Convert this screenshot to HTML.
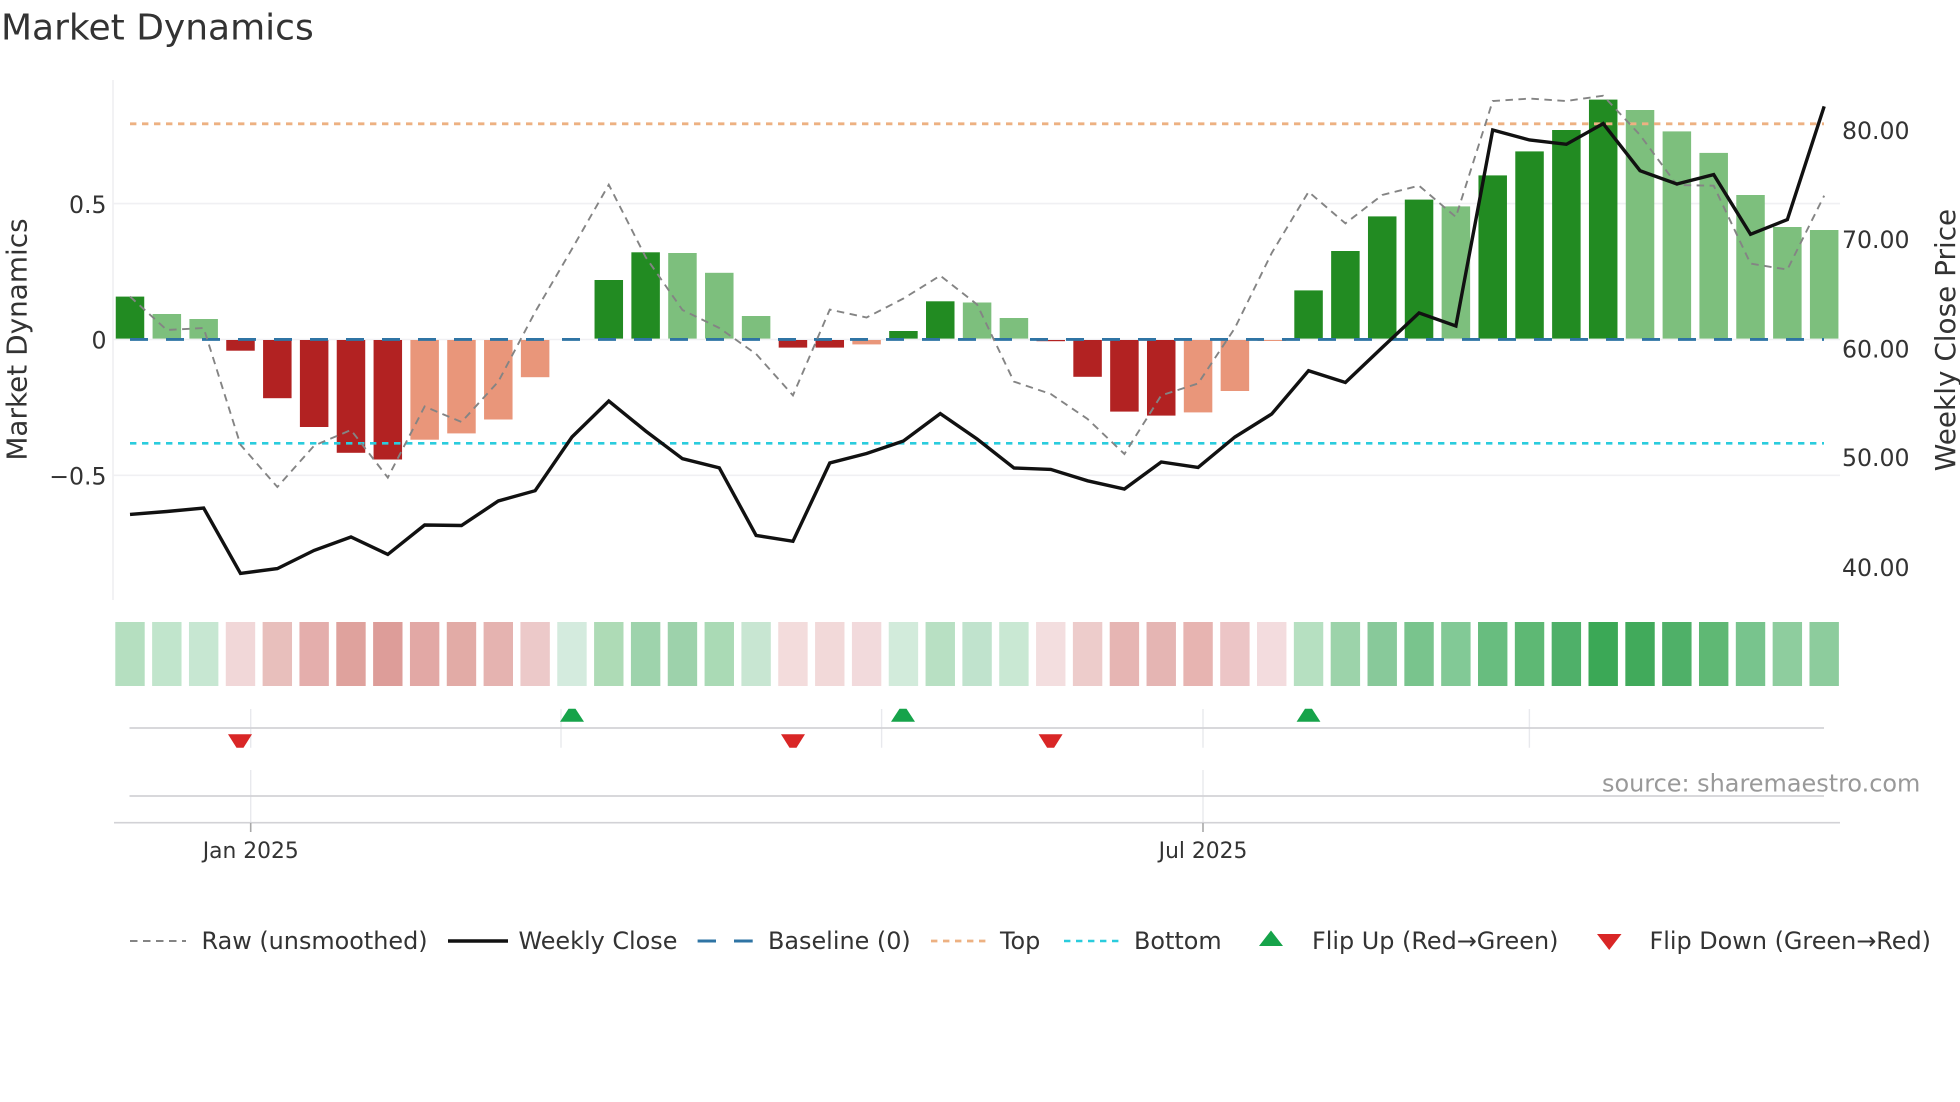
<!DOCTYPE html>
<html lang="en">
<head>
<meta charset="utf-8">
<title>Market Dynamics</title>
<style>
html,body{margin:0;padding:0;background:#fff;width:1960px;height:1102px;overflow:hidden}
svg{display:block}
text{font-family:"DejaVu Sans","Liberation Sans",sans-serif;fill:#333}
.t{font-size:23.9px}
.k{font-size:23.6px}
.dg{fill:#228b22}.lg{fill:#7dbf7d}.dr{fill:#b22222}.lr{fill:#e9967a}
</style>
</head>
<body>
<svg width="1960" height="1102" viewBox="0 0 1960 1102" xmlns="http://www.w3.org/2000/svg">
<rect width="1960" height="1102" fill="#fff"/>
<text x="1" y="39.5" font-size="36">Market Dynamics</text>

<!-- grid and spine -->
<path d="M113 80V600" stroke="#eeeef0" stroke-width="1.5" fill="none"/>
<path d="M113 203.6H1840M113 475.3H1840M113 339.5H1840" stroke="#f0f0f3" stroke-width="1.6" fill="none"/>

<!-- bars -->
<g>
<rect class="dg" x="115.75" y="296.6" width="28.5" height="42"/>
<rect class="lg" x="152.58" y="314" width="28.5" height="24.6"/>
<rect class="lg" x="189.41" y="319" width="28.5" height="19.6"/>
<rect class="dr" x="226.24" y="340" width="28.5" height="10.7"/>
<rect class="dr" x="263.07" y="340" width="28.5" height="58.2"/>
<rect class="dr" x="299.9" y="340" width="28.5" height="87"/>
<rect class="dr" x="336.73" y="340" width="28.5" height="112.8"/>
<rect class="dr" x="373.56" y="340" width="28.5" height="119.5"/>
<rect class="lr" x="410.39" y="340" width="28.5" height="99.7"/>
<rect class="lr" x="447.22" y="340" width="28.5" height="93.4"/>
<rect class="lr" x="484.05" y="340" width="28.5" height="79.5"/>
<rect class="lr" x="520.88" y="340" width="28.5" height="37.2"/>
<rect class="dg" x="594.54" y="280" width="28.5" height="58.6"/>
<rect class="dg" x="631.37" y="252.3" width="28.5" height="86.3"/>
<rect class="lg" x="668.2" y="253" width="28.5" height="85.6"/>
<rect class="lg" x="705.03" y="272.8" width="28.5" height="65.8"/>
<rect class="lg" x="741.86" y="316" width="28.5" height="22.6"/>
<rect class="dr" x="778.69" y="340" width="28.5" height="7.6"/>
<rect class="dr" x="815.52" y="340" width="28.5" height="7.6"/>
<rect class="lr" x="852.35" y="340" width="28.5" height="4.4"/>
<rect class="dg" x="889.18" y="331" width="28.5" height="7.6"/>
<rect class="dg" x="926.01" y="301.3" width="28.5" height="37.3"/>
<rect class="lg" x="962.84" y="302.5" width="28.5" height="36.1"/>
<rect class="lg" x="999.67" y="318" width="28.5" height="20.6"/>
<rect class="dr" x="1036.5" y="340" width="28.5" height="1.2"/>
<rect class="dr" x="1073.33" y="340" width="28.5" height="36.8"/>
<rect class="dr" x="1110.16" y="340" width="28.5" height="71.6"/>
<rect class="dr" x="1146.99" y="340" width="28.5" height="75.6"/>
<rect class="lr" x="1183.82" y="340" width="28.5" height="72.4"/>
<rect class="lr" x="1220.65" y="340" width="28.5" height="51"/>
<rect class="lr" x="1257.48" y="340" width="28.5" height="1"/>
<rect class="dg" x="1294.31" y="290.4" width="28.5" height="48.2"/>
<rect class="dg" x="1331.14" y="251" width="28.5" height="87.6"/>
<rect class="dg" x="1367.97" y="216.4" width="28.5" height="122.2"/>
<rect class="dg" x="1404.8" y="199.6" width="28.5" height="139"/>
<rect class="lg" x="1441.63" y="206.4" width="28.5" height="132.2"/>
<rect class="dg" x="1478.46" y="175.4" width="28.5" height="163.2"/>
<rect class="dg" x="1515.29" y="151.4" width="28.5" height="187.2"/>
<rect class="dg" x="1552.12" y="130" width="28.5" height="208.6"/>
<rect class="dg" x="1588.95" y="99.6" width="28.5" height="239"/>
<rect class="lg" x="1625.78" y="110" width="28.5" height="228.6"/>
<rect class="lg" x="1662.61" y="131.4" width="28.5" height="207.2"/>
<rect class="lg" x="1699.44" y="152.9" width="28.5" height="185.7"/>
<rect class="lg" x="1736.27" y="195" width="28.5" height="143.6"/>
<rect class="lg" x="1773.1" y="227" width="28.5" height="111.6"/>
<rect class="lg" x="1809.93" y="230" width="28.5" height="108.6"/>
</g>

<!-- reference lines -->
<path d="M130 339.4H1824" stroke="#2f74a4" stroke-width="2.9" stroke-dasharray="18 18" fill="none"/>
<path d="M130 123.8H1824" stroke="#edb182" stroke-width="2.8" stroke-dasharray="6.4 5.6" fill="none"/>
<path d="M130 443.3H1824" stroke="#2accdd" stroke-width="2.6" stroke-dasharray="6.4 5.6" fill="none"/>

<!-- raw -->
<polyline fill="none" stroke="#848484" stroke-width="1.9" stroke-dasharray="7.5 5.5" points="130,296.6 166.83,330 203.66,328 240.49,444.8 277.32,487 314.15,445.6 350.98,430 387.81,477.6 424.64,406.5 461.47,422 498.3,381.6 535.13,312 571.96,249 608.79,184.7 645.62,257 682.45,310 719.28,328 756.11,354 792.94,395.4 829.77,309.6 866.6,317.5 903.43,298.5 940.26,275.6 977.09,304.5 1013.92,381.6 1050.75,394 1087.58,419 1124.41,454 1161.24,395.4 1198.07,383.5 1234.9,328 1271.73,253 1308.56,191.8 1345.39,223.4 1382.22,195 1419.05,185.7 1455.88,217 1492.71,101 1529.54,98.6 1566.37,101 1603.2,95.7 1640.03,135 1676.86,185 1713.69,185.7 1750.52,263.6 1787.35,269.6 1824.18,195.7"/>

<!-- weekly close -->
<polyline fill="none" stroke="#111" stroke-width="3.4" stroke-linejoin="miter" points="130,514.4 166.83,511.5 203.66,508 240.49,573.4 277.32,568.6 314.15,550.4 350.98,537 387.81,554.4 424.64,525 461.47,525.5 498.3,501 535.13,490.7 571.96,437 608.79,401 645.62,431 682.45,458.7 719.28,467.8 756.11,535.4 792.94,541.3 829.77,463 866.6,453.5 903.43,441 940.26,413.6 977.09,439 1013.92,468 1050.75,469.4 1087.58,480.8 1124.41,489 1161.24,462 1198.07,467.4 1234.9,437 1271.73,414 1308.56,370.7 1345.39,382.5 1382.22,347.5 1419.05,312.9 1455.88,326 1492.71,130 1529.54,140 1566.37,144.3 1603.2,123.6 1640.03,170.7 1676.86,184 1713.69,174.6 1750.52,234.3 1787.35,219.6 1824.18,106.4"/>

<!-- axis labels -->
<g text-anchor="end">
<text x="106.5" y="213" class="k">0.5</text>
<text x="106.5" y="348.5" class="k">0</text>
<text x="106.5" y="484.5" class="k">−0.5</text>
</g>
<g>
<text x="1842" y="139" class="k">80.00</text>
<text x="1842" y="248" class="k">70.00</text>
<text x="1842" y="357.5" class="k">60.00</text>
<text x="1842" y="466" class="k">50.00</text>
<text x="1842" y="576" class="k">40.00</text>
</g>
<text transform="translate(26.5 339.5) rotate(-90)" text-anchor="middle" font-size="27.9">Market Dynamics</text>
<text transform="translate(1955 340) rotate(-90)" text-anchor="middle" font-size="27.9">Weekly Close Price</text>

<!-- heat strip -->
<g>
<rect x="115.3" y="622" width="29.4" height="64" fill="#b5dfc0"/>
<rect x="152.13" y="622" width="29.4" height="64" fill="#c1e5cc"/>
<rect x="188.96" y="622" width="29.4" height="64" fill="#c7e7d2"/>
<rect x="225.79" y="622" width="29.4" height="64" fill="#f1d7d8"/>
<rect x="262.62" y="622" width="29.4" height="64" fill="#e8bfbc"/>
<rect x="299.45" y="622" width="29.4" height="64" fill="#e4aeac"/>
<rect x="336.28" y="622" width="29.4" height="64" fill="#dfa29d"/>
<rect x="373.11" y="622" width="29.4" height="64" fill="#dd9d99"/>
<rect x="409.94" y="622" width="29.4" height="64" fill="#e2a8a5"/>
<rect x="446.77" y="622" width="29.4" height="64" fill="#e2aba6"/>
<rect x="483.6" y="622" width="29.4" height="64" fill="#e5b3b0"/>
<rect x="520.43" y="622" width="29.4" height="64" fill="#ecc9c9"/>
<rect x="557.26" y="622" width="29.4" height="64" fill="#d4ebde"/>
<rect x="594.09" y="622" width="29.4" height="64" fill="#aedbb6"/>
<rect x="630.92" y="622" width="29.4" height="64" fill="#9ed3ac"/>
<rect x="667.75" y="622" width="29.4" height="64" fill="#9dd2ab"/>
<rect x="704.58" y="622" width="29.4" height="64" fill="#aadab5"/>
<rect x="741.41" y="622" width="29.4" height="64" fill="#c8e6d2"/>
<rect x="778.24" y="622" width="29.4" height="64" fill="#f3dcdc"/>
<rect x="815.07" y="622" width="29.4" height="64" fill="#f2d9d9"/>
<rect x="851.9" y="622" width="29.4" height="64" fill="#f2dadc"/>
<rect x="888.73" y="622" width="29.4" height="64" fill="#d2ebdb"/>
<rect x="925.56" y="622" width="29.4" height="64" fill="#b8e0c3"/>
<rect x="962.39" y="622" width="29.4" height="64" fill="#c0e3cd"/>
<rect x="999.22" y="622" width="29.4" height="64" fill="#c9e8d3"/>
<rect x="1036.05" y="622" width="29.4" height="64" fill="#f3dedf"/>
<rect x="1072.88" y="622" width="29.4" height="64" fill="#edcccb"/>
<rect x="1109.71" y="622" width="29.4" height="64" fill="#e6b5b3"/>
<rect x="1146.54" y="622" width="29.4" height="64" fill="#e5b5b3"/>
<rect x="1183.37" y="622" width="29.4" height="64" fill="#e7b4b1"/>
<rect x="1220.2" y="622" width="29.4" height="64" fill="#ecc5c6"/>
<rect x="1257.03" y="622" width="29.4" height="64" fill="#f3dcde"/>
<rect x="1293.86" y="622" width="29.4" height="64" fill="#b6e0c1"/>
<rect x="1330.69" y="622" width="29.4" height="64" fill="#9cd3aa"/>
<rect x="1367.52" y="622" width="29.4" height="64" fill="#88c99a"/>
<rect x="1404.35" y="622" width="29.4" height="64" fill="#79c48d"/>
<rect x="1441.18" y="622" width="29.4" height="64" fill="#82c996"/>
<rect x="1478.01" y="622" width="29.4" height="64" fill="#68bd7f"/>
<rect x="1514.84" y="622" width="29.4" height="64" fill="#5eb874"/>
<rect x="1551.67" y="622" width="29.4" height="64" fill="#4fb069"/>
<rect x="1588.5" y="622" width="29.4" height="64" fill="#3ba856"/>
<rect x="1625.33" y="622" width="29.4" height="64" fill="#41aa5b"/>
<rect x="1662.16" y="622" width="29.4" height="64" fill="#4fb068"/>
<rect x="1698.99" y="622" width="29.4" height="64" fill="#5fb874"/>
<rect x="1735.82" y="622" width="29.4" height="64" fill="#78c48d"/>
<rect x="1772.65" y="622" width="29.4" height="64" fill="#8ecd9e"/>
<rect x="1809.48" y="622" width="29.4" height="64" fill="#8dcc9d"/>
</g>

<!-- flip rows -->
<path d="M250.7 709V747.7M561 709V747.7M881.6 709V747.7M1203 709V747.7M1529.4 709V747.7M250.7 770V822.7M1203 770V822.7" stroke="#e8e9ed" stroke-width="1.4" fill="none"/>
<path d="M129.5 728H1824M129.5 796H1824" stroke="#d2d2d6" stroke-width="1.8" fill="none"/>
<path d="M114 822.7H1840" stroke="#d2d2d6" stroke-width="1.6" fill="none"/>
<path d="M250.7 823V832M1203 823V832" stroke="#a8a8a8" stroke-width="1.6" fill="none"/>

<g fill="#16a34a">
<polygon points="560,721.8 568.5,708.7 575.5,708.7 584,721.8"/>
<polygon points="891,721.8 899.5,708.7 906.5,708.7 915,721.8"/>
<polygon points="1296.6,721.8 1305,708.7 1312,708.7 1320.4,721.8"/>
<polygon points="1259,946 1271,930.5 1283,946"/>
</g>
<g fill="#d92626">
<polygon points="228,734.3 252,734.3 243.5,747.7 236.5,747.7"/>
<polygon points="781,734.3 805,734.3 796.5,747.7 789.5,747.7"/>
<polygon points="1038.6,734.3 1062.6,734.3 1054.1,747.7 1047.1,747.7"/>
<polygon points="1597,934 1621.5,934 1609.2,950"/>
</g>

<text x="250.7" y="858" text-anchor="middle" font-size="21.8">Jan 2025</text>
<text x="1203" y="858" text-anchor="middle" font-size="21.8">Jul 2025</text>
<text x="1602" y="791.5" font-size="23.95" style="fill:#999">source: sharemaestro.com</text>

<!-- legend -->
<path d="M130 941H186" stroke="#848484" stroke-width="2" stroke-dasharray="7.5 5.5" fill="none"/>
<path d="M448 941H508" stroke="#111" stroke-width="3.4" fill="none"/>
<path d="M697.6 941H716M734 941H752.7" stroke="#2f74a4" stroke-width="2.9" fill="none"/>
<path d="M931 941H986" stroke="#edb182" stroke-width="2.8" stroke-dasharray="6.4 5.6" fill="none"/>
<path d="M1064 941H1119" stroke="#2accdd" stroke-width="2.6" stroke-dasharray="6.4 5.6" fill="none"/>
<text x="201.5" y="949" class="t">Raw (unsmoothed)</text>
<text x="518.5" y="949" class="t">Weekly Close</text>
<text x="768" y="949" class="t">Baseline (0)</text>
<text x="1000" y="949" class="t">Top</text>
<text x="1134" y="949" class="t">Bottom</text>
<text x="1312" y="949" class="t">Flip Up (Red→Green)</text>
<text x="1649.5" y="949" class="t">Flip Down (Green→Red)</text>
</svg>
</body>
</html>
